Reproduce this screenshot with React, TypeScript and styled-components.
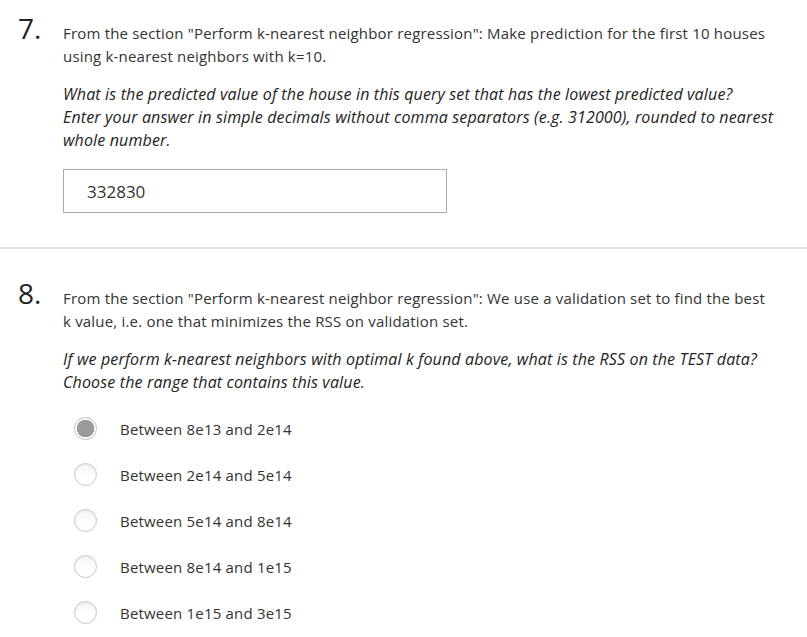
import React from "react";
import styled, { createGlobalStyle } from "styled-components";

const Global = createGlobalStyle`
  body {
    margin: 0;
    background: #fff;
    font-family: "Open Sans", "Noto Sans", sans-serif;
    color: #333;
  }
`;

const Page = styled.div`
  width: 807px;
`;

const Question = styled.section<{ $top: number; $bottom: number; $divider?: boolean }>`
  display: flex;
  align-items: baseline;
  padding: ${(p) => p.$top}px 0 ${(p) => p.$bottom}px 18px;
  border-bottom: ${(p) => (p.$divider ? "2px solid #e1e1e1" : "none")};
`;

const Number = styled.div`
  width: 45px;
  flex: none;
  font-size: 28px;
  line-height: 23px;
  color: #222;
`;

const Body = styled.div`
  width: 714px;
`;

const Prompt = styled.p`
  margin: 0;
  font-size: 15px;
  line-height: 23px;
  letter-spacing: 0.19px;
  color: #333;
`;

const Ask = styled.p`
  margin: 15px 0 0;
  max-width: 711px;
  font-size: 16px;
  line-height: 23px;
  letter-spacing: 0.15px;
  font-style: italic;
  color: #222;
`;

const AnswerBox = styled.div`
  margin-top: 17px;
  width: 384px;
  height: 44px;
  box-sizing: border-box;
  border: 1px solid #aaa;
  padding: 0 0 0 23px;
  display: flex;
  align-items: center;
  font-size: 17px;
  color: #333;
`;

const Options = styled.div`
  margin-top: 23px;
  display: flex;
  flex-direction: column;
  gap: 23px;
  padding-left: 11px;
`;

const Option = styled.label`
  display: flex;
  align-items: center;
  gap: 23px;
  height: 23px;
  font-size: 15px;
  letter-spacing: 0.19px;
  color: #333;
`;

const Radio = styled.span<{ $checked?: boolean }>`
  box-sizing: border-box;
  width: 23px;
  height: 23px;
  border-radius: 50%;
  flex: none;
  border: 1px solid ${(p) => (p.$checked ? "#bdbdbd" : "#c8c8c8")};
  background: ${(p) =>
    p.$checked
      ? "radial-gradient(circle, #9a9a9a 0 8.5px, #fff 9px)"
      : "linear-gradient(#f4f4f4, #fff 60%)"};
  box-shadow: ${(p) => (p.$checked ? "none" : "inset 0 1px 2px rgba(0,0,0,0.06)")};
`;

const options = [
  "Between 8e13 and 2e14",
  "Between 2e14 and 5e14",
  "Between 5e14 and 8e14",
  "Between 8e14 and 1e15",
  "Between 1e15 and 3e15",
];

export default function App() {
  return (
    <Page>
      <Global />
      <Question $top={17} $bottom={34} $divider>
        <Number>7.</Number>
        <Body>
          <Prompt>
            From the section "Perform k-nearest neighbor regression": Make prediction for the first 10 houses
            using k-nearest neighbors with k=10.
          </Prompt>
          <Ask>
            What is the predicted value of the house in this query set that has the lowest predicted value?
            Enter your answer in simple decimals without comma separators (e.g. 312000), rounded to nearest
            whole number.
          </Ask>
          <AnswerBox>332830</AnswerBox>
        </Body>
      </Question>
      <Question $top={33} $bottom={12}>
        <Number>8.</Number>
        <Body>
          <Prompt>
            From the section "Perform k-nearest neighbor regression": We use a validation set to find the best
            k value, i.e. one that minimizes the RSS on validation set.
          </Prompt>
          <Ask>
            If we perform k-nearest neighbors with optimal k found above, what is the RSS on the TEST data?
            Choose the range that contains this value.
          </Ask>
          <Options>
            {options.map((o, i) => (
              <Option key={o}>
                <Radio $checked={i === 0} />
                {o}
              </Option>
            ))}
          </Options>
        </Body>
      </Question>
    </Page>
  );
}
